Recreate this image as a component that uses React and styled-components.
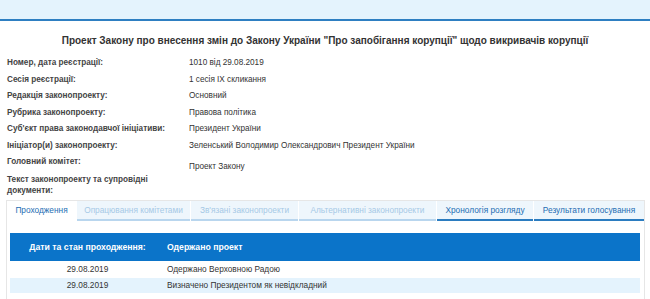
import React from 'react';
import styled, { createGlobalStyle } from 'styled-components';

const Global = createGlobalStyle`
  body {
    margin: 0;
    background: #fff;
    font-family: "Liberation Sans", Arial, sans-serif;
    color: #333;
  }
`;

const TopBar = styled.div`
  height: 19px;
  background: #e4f3fd;
  border-bottom: 2px solid #2e7fc2;
`;

const Title = styled.h1`
  margin: 0;
  padding: 13px 0 0;
  text-align: center;
  font-size: 10px;
  font-weight: bold;
  color: #333;
  line-height: 14px;
`;

const Info = styled.div`
  display: grid;
  grid-template-columns: 182px 1fr;
  padding: 7px 0 0 7px;
  font-size: 8.2px;
  line-height: 16.5px;
`;

const Label = styled.div`
  grid-column: 1;
  font-weight: bold;
  color: #444;
`;

const Value = styled.div`
  grid-column: 2;
  color: #333;
  grid-row: ${(p) => p.$span || 'auto'};
  padding-top: ${(p) => p.$offset || 0}px;
`;

const LabelStack = styled.div`
  grid-column: 1;
  font-weight: bold;
  color: #444;
  line-height: 11.5px;
  padding-top: 3px;
`;

const Panel = styled.div`
  margin: 3px 5px 0 6px;
  border: 1px solid #e6e6e6;
  border-bottom: none;
  height: 100px;
`;

const Tabs = styled.div`
  display: flex;
  height: 20px;
`;

const Tab = styled.div`
  flex: 0 0 ${(p) => p.$w}px;
  margin-right: 1px;
  display: flex;
  align-items: center;
  justify-content: center;
  font-size: 8.3px;
  background: ${(p) => (p.$active ? '#fff' : '#eef6fc')};
  color: ${(p) => (p.$active || p.$live ? '#1d6db3' : '#a6c9e6')};
  border-bottom: 2px solid
    ${(p) => (p.$active ? 'transparent' : p.$live ? '#2b7cc0' : '#b9d6ee')};
  box-sizing: border-box;
`;

const Body = styled.div`
  padding: 12px 4px 0 3px;
`;

const Table = styled.div`
  font-size: 8.3px;
`;

const HeadRow = styled.div`
  display: grid;
  grid-template-columns: 155px 1fr;
  height: 28px;
  align-items: center;
  background: #0b74c9;
  color: #fff;
  font-weight: bold;
  font-size: 8.7px;
`;

const Row = styled.div`
  display: grid;
  grid-template-columns: 155px 1fr;
  height: 15px;
  align-items: center;
  margin-top: 1px;
  background: ${(p) => (p.$alt ? '#e4f3fd' : '#fff')};
  color: #333;
`;

const DateCell = styled.div`
  text-align: center;
`;

const TextCell = styled.div`
  padding-left: 2px;
`;

const rows = [
  ['Номер, дата реєстрації:', '1010 від 29.08.2019'],
  ['Сесія реєстрації:', '1 сесія IX скликання'],
  ['Редакція законопроекту:', 'Основний'],
  ['Рубрика законопроекту:', 'Правова політика'],
  ["Суб'єкт права законодавчої ініціативи:", 'Президент України'],
  ['Ініціатор(и) законопроекту:', 'Зеленський Володимир Олександрович Президент України'],
];

const tabs = [
  { t: 'Проходження', w: 69, active: true },
  { t: 'Опрацювання комітетами', w: 113 },
  { t: "Зв'язані законопроекти", w: 107 },
  { t: 'Альтернативні законопроекти', w: 137 },
  { t: 'Хронологія розгляду', w: 96, live: true },
  { t: 'Результати голосування', w: 110, live: true },
];

export default function App() {
  return (
    <>
      <Global />
      <TopBar />
      <Title>
        Проект Закону про внесення змін до Закону України "Про запобігання корупції" щодо викривачів корупції
      </Title>
      <Info>
        {rows.map(([l, v]) => (
          <React.Fragment key={l}>
            <Label>{l}</Label>
            <Value>{v}</Value>
          </React.Fragment>
        ))}
        <Label>Головний комітет:</Label>
        <Value $span="7 / span 2" $offset={5}>
          Проект Закону
        </Value>
        <LabelStack>
          Текст законопроекту та супровідні
          <br />
          документи:
        </LabelStack>
      </Info>
      <Panel>
        <Tabs>
          {tabs.map((t) => (
            <Tab key={t.t} $w={t.w} $active={t.active} $live={t.live}>
              {t.t}
            </Tab>
          ))}
        </Tabs>
        <Body>
          <Table>
            <HeadRow>
              <DateCell>Дати та стан проходження:</DateCell>
              <TextCell>Одержано проект</TextCell>
            </HeadRow>
            <Row>
              <DateCell>29.08.2019</DateCell>
              <TextCell>Одержано Верховною Радою</TextCell>
            </Row>
            <Row $alt>
              <DateCell>29.08.2019</DateCell>
              <TextCell>Визначено Президентом як невідкладний</TextCell>
            </Row>
          </Table>
        </Body>
      </Panel>
    </>
  );
}
